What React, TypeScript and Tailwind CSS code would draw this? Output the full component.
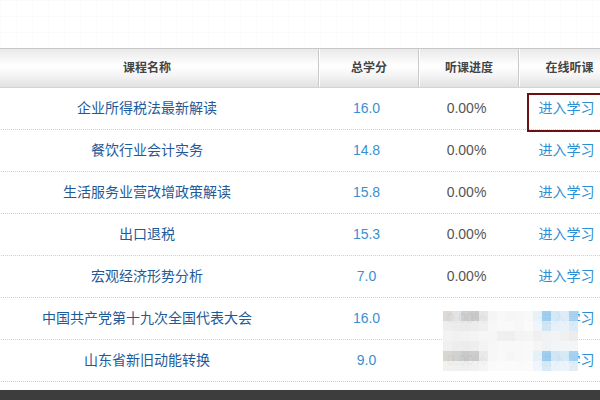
import React from "react";

const courses = [
  { name: "企业所得税法最新解读", credit: "16.0" },
  { name: "餐饮行业会计实务", credit: "14.8" },
  { name: "生活服务业营改增政策解读", credit: "15.8" },
  { name: "出口退税", credit: "15.3" },
  { name: "宏观经济形势分析", credit: "7.0" },
  { name: "中国共产党第十九次全国代表大会", credit: "16.0" },
  { name: "山东省新旧动能转换", credit: "9.0" },
];

// pixelated blur over the last two rows
const mosaic = [
  ["#ddd8d3", "#e2e2e2", "#cdcdcd", "#c9c9c9", "#e6e6e6", "#f5f5f5", "#f8f8f8", "#f6f6f6", "#f7f7f7", "#f9f9f9", "#e6f1f9", "#9fcdee", "#d3e7f6", "#dcebf7", "#a8d2f0"],
  ["#eeeeee", "#ececec", "#e9e9e9", "#ebebeb", "#efefef", "#f7f7f7", "#f9f9f9", "#f9f9f9", "#f7f7f7", "#fafafa", "#eef5fb", "#cfe5f5", "#e4f0f9", "#e8f2fa", "#d9eaf7"],
  ["#f3f3f3", "#f1f1f1", "#f2f2f2", "#f4f4f4", "#f6f6f6", "#f6f6f6", "#f0f0f0", "#efefef", "#f4f4f4", "#f5f5f5", "#f0f0f0", "#f2f2f2", "#f3f3f3", "#f0f0f0", "#ececec"],
  ["#f0f0f0", "#ededed", "#ebebeb", "#eeeeee", "#f3f3f3", "#f6f6f6", "#f8f8f8", "#f8f8f8", "#f8f8f8", "#f9f9f9", "#f5f5f5", "#eef3f7", "#f2f5f8", "#f3f6f9", "#f3f6f9"],
  ["#d8d4d0", "#cfcfcf", "#c8c8c8", "#cbcbcb", "#e9e9e9", "#f7f7f7", "#f9f9f9", "#f6f6f6", "#f8f8f8", "#f9f9f9", "#e4f0f9", "#9ccbee", "#cfe4f4", "#d5e8f6", "#a5d0f0"],
  ["#f1f1f1", "#f0f0f0", "#efefef", "#f1f1f1", "#f5f5f5", "#fafafa", "#fbfbfb", "#fbfbfb", "#fafafa", "#fbfbfb", "#f0f6fb", "#d7e9f6", "#eaf3fa", "#edf5fb", "#e0eef8"],
];

const headCell =
  "flex items-center justify-center border-l border-l-white border-r border-r-[#c9c9c9] text-[12px] font-bold text-[#444]";

export default function App() {
  return (
    <div
      className="relative w-[600px] h-[400px] overflow-hidden bg-white"
      style={{ fontFamily: '"Liberation Sans", Arial, "Noto Sans CJK SC", sans-serif' }}
    >
      <div className="h-[48px] bg-[linear-gradient(#fbfbfb_1px,transparent_1px),linear-gradient(90deg,#fbfbfb_1px,transparent_1px)] bg-[size:16px_16px]" />

      <div className="ml-[-25px] w-[645px]">
        <div className="grid grid-cols-[344px_100px_100px_101px] h-[40px] border-t border-t-[#c8c8c8] border-b border-b-[#d4d4d4] bg-[linear-gradient(#e9e9e9,#ffffff_45%,#f4f4f4_70%,#e1e1e1)]">
          <div className={headCell}>课程名称</div>
          <div className={headCell}>总学分</div>
          <div className={headCell}>听课进度</div>
          <div className={headCell}>在线听课</div>
        </div>

        {courses.map((c) => (
          <div
            key={c.name}
            className="grid grid-cols-[344px_100px_100px_101px] h-[42px] border-b border-dotted border-b-[#cfcfcf] text-[14px]"
          >
            <div className="flex items-center justify-center text-[#1f5a98]">{c.name}</div>
            <div className="flex items-center justify-center pr-[5px] text-[#3b8fd0]">{c.credit}</div>
            <div className="flex items-center justify-center pr-[5px] text-[#555]">0.00%</div>
            <div className="flex items-center justify-center pr-[6px] text-[#2a8fd4]">进入学习</div>
          </div>
        ))}
      </div>

      <div className="absolute left-[527px] top-[93px] w-[90px] h-[39px] border-2 border-[#6b1111]" />

      <div className="absolute left-[443px] top-[311px] flex flex-col opacity-95">
        {mosaic.map((row, i) => (
          <div key={i} className="flex">
            {row.map((col, j) => (
              <div key={j} className="w-[9px] h-[10px]" style={{ background: col }} />
            ))}
          </div>
        ))}
      </div>

      <div className="absolute left-0 right-0 bottom-0 h-[10px] bg-[#3d3d3d]" />
    </div>
  );
}
